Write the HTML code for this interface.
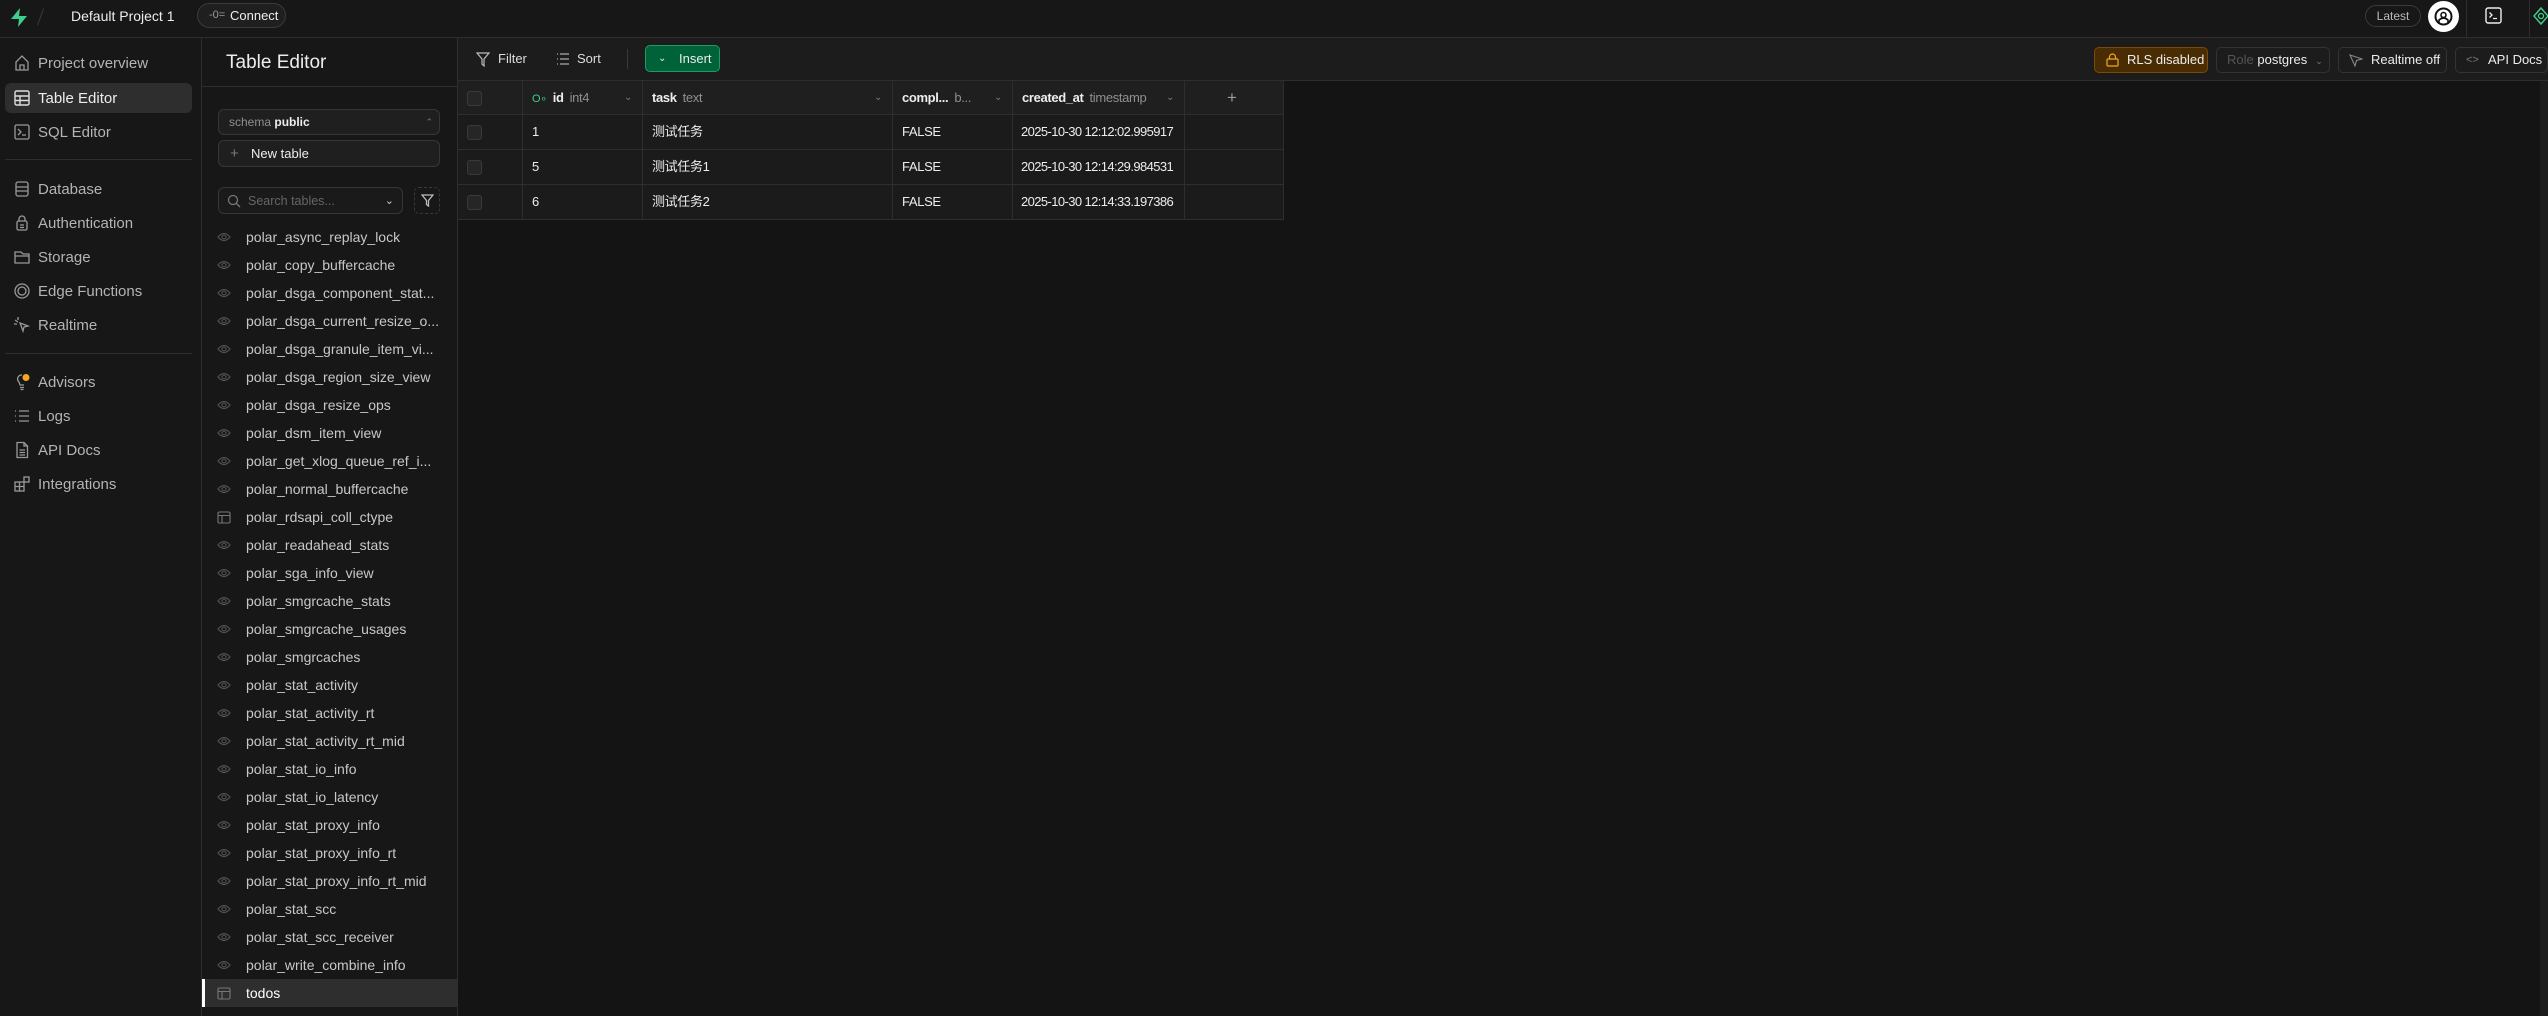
<!DOCTYPE html>
<html><head><meta charset="utf-8"><style>
*{box-sizing:border-box;margin:0;padding:0}
body{width:2548px;height:1016px;background:#141414;font-family:"Liberation Sans","Noto Sans CJK SC",sans-serif;color:#ededed;position:relative;overflow:hidden}
.abs{position:absolute}
#top{left:0;top:0;width:2548px;height:38px;background:#171717;border-bottom:1px solid #2e2e2e}
#side{left:0;top:38px;width:202px;height:978px;background:#171717;border-right:1px solid #2e2e2e}
#panel{left:202px;top:38px;width:256px;height:978px;background:#171717;border-right:1px solid #2e2e2e}
#tool{left:458px;top:38px;width:2090px;height:43px;background:#1c1c1c;border-bottom:1px solid #2e2e2e}
.nav{position:absolute;left:5px;width:187px;height:30px;font-size:15px;color:#b4b4b4;display:flex;align-items:center;padding-left:33px}
.nav svg{position:absolute;left:8px;top:6px}
.nav.act{background:#2e2e2e;color:#ededed;border-radius:6px}
.hr{position:absolute;left:5px;width:187px;height:1px;background:#2e2e2e}
.it{position:absolute;left:0;width:256px;height:28px;font-size:14px;color:#c8c8c8;padding-left:44px;line-height:28px;white-space:nowrap}
.it svg{position:absolute;left:15px;top:9px}
.btn{position:absolute;border:1px solid #363636;border-radius:6px;font-size:13px;display:flex;align-items:center;background:#1f1f1f}
.cell{position:absolute;height:35px;border-right:1px solid #2e2e2e;border-bottom:1px solid #2e2e2e;font-size:13px;letter-spacing:-0.35px;line-height:34px;padding-left:9px;white-space:nowrap;overflow:hidden}
.hd{background:#1f1f1f;height:34px;font-weight:bold}
.hd span{font-weight:normal;color:#8f8f8f;margin-left:6px}
.row{background:#1b1b1b}
.cb{position:absolute;left:9px;top:10px;width:15px;height:15px;border:1px solid #3a3a3a;border-radius:3px;background:#262626}
.chev{position:absolute;right:10px;top:0;color:#7a7a7a;font-size:10px;font-weight:normal}
</style></head><body>
<div id="top" class="abs">
 <svg class="abs" style="left:10px;top:8px" width="18" height="19" viewBox="0 0 18 19"><path d="M10 0 L1 11 H9 L8 19 L17 8 H9 Z" fill="#3ecf8e"/></svg>
 <div class="abs" style="left:40px;top:8px;width:1px;height:18px;background:#3a3a3a;transform:rotate(20deg)"></div>
 <div class="abs" style="left:71px;top:8px;font-size:14px">Default Project 1</div>
 <div class="abs" style="left:197px;top:3px;width:89px;height:25px;border:1px solid #3a3a3a;border-radius:13px;background:#1f1f1f;font-size:13px;padding-left:32px;line-height:23px">Connect<span class="abs" style="left:11px;top:0;color:#999;font-size:11px">-0=</span></div>
 <div class="abs" style="left:2365px;top:5px;width:56px;height:22px;border:1px solid #3a3a3a;border-radius:11px;font-size:12px;color:#bbb;text-align:center;line-height:20px">Latest</div>
 <div class="abs" style="left:2428px;top:1px;width:31px;height:31px;border-radius:50%;background:#fff"><svg width="31" height="31" viewBox="0 0 31 31"><circle cx="15.5" cy="15.5" r="8" fill="none" stroke="#111" stroke-width="2"/><circle cx="15.5" cy="14" r="2.5" fill="none" stroke="#111" stroke-width="1.6"/><path d="M11 23 V19 Q15.5 15 20 19 V23" fill="none" stroke="#111" stroke-width="1.6"/></svg></div>
 <div class="abs" style="left:2466px;top:0;width:1px;height:38px;background:#2e2e2e"></div>
 <svg class="abs" style="left:2485px;top:7px" width="17" height="17" viewBox="0 0 17 17"><rect x="1" y="1" width="15" height="15" rx="2" fill="none" stroke="#eee" stroke-width="1.4"/><path d="M4.5 5.5 L7 8 L4.5 10.5 M8 11.5 H12" stroke="#eee" stroke-width="1.3" fill="none"/></svg>
 <div class="abs" style="left:2529px;top:0;width:1px;height:38px;background:#2e2e2e"></div>
 <svg class="abs" style="left:2533px;top:6px" width="16" height="20" viewBox="0 0 16 20"><path d="M8 2 L15 10 L8 18 L1 10 Z" fill="none" stroke="#3ecf8e" stroke-width="1.4"/><circle cx="8" cy="10" r="2.5" fill="none" stroke="#3ecf8e" stroke-width="1.3"/></svg>
</div>
<div id="side" class="abs">
 <div class="nav" style="top:10px"><svg width="18" height="18" viewBox="0 0 18 18" fill="none" stroke="#999" stroke-width="1.3"><path d="M3 8 L9 2 L15 8 V16 H3 Z M7 16 V11 H11 V16"/></svg>Project overview</div>
 <div class="nav act" style="top:45px"><svg width="18" height="18" viewBox="0 0 18 18" fill="none" stroke="#ddd" stroke-width="1.4"><rect x="2" y="2" width="14" height="14" rx="1.5"/><path d="M2 7 H16 M2 11.5 H16 M7 7 V16"/></svg>Table Editor</div>
 <div class="nav" style="top:79px"><svg width="18" height="18" viewBox="0 0 18 18" fill="none" stroke="#999" stroke-width="1.3"><rect x="2" y="2" width="14" height="14" rx="1.5"/><path d="M5 6 L8 9 L5 12 M9 12 H13"/></svg>SQL Editor</div>
 <div class="hr" style="top:121px"></div>
 <div class="nav" style="top:136px"><svg width="18" height="18" viewBox="0 0 18 18" fill="none" stroke="#999" stroke-width="1.3"><rect x="3" y="2" width="12" height="14" rx="2"/><path d="M3 7 H15 M3 11 H15"/></svg>Database</div>
 <div class="nav" style="top:170px"><svg width="18" height="18" viewBox="0 0 18 18" fill="none" stroke="#999" stroke-width="1.3"><rect x="4" y="7" width="10" height="9" rx="1.5"/><path d="M6 7 V5 A3 3 0 0 1 12 5 V7 M7 11 H11 M7 13.5 H11"/></svg>Authentication</div>
 <div class="nav" style="top:204px"><svg width="18" height="18" viewBox="0 0 18 18" fill="none" stroke="#999" stroke-width="1.3"><path d="M2 4 H8 L10 6 H16 V15 H2 Z M2 8 H16"/></svg>Storage</div>
 <div class="nav" style="top:238px"><svg width="18" height="18" viewBox="0 0 18 18" fill="none" stroke="#999" stroke-width="1.3"><circle cx="9" cy="9" r="7"/><circle cx="9" cy="9" r="4"/></svg>Edge Functions</div>
 <div class="nav" style="top:272px"><svg width="18" height="18" viewBox="0 0 18 18" fill="none" stroke="#999" stroke-width="1.3"><path d="M7 7 L15 10 L11 11 L10 15 Z M2 4 L5 6 M5 1 V4 M1 8 H4"/></svg>Realtime</div>
 <div class="hr" style="top:315px"></div>
 <div class="nav" style="top:329px"><svg width="20" height="18" viewBox="0 0 20 18" fill="none" stroke="#999" stroke-width="1.3"><path d="M9 2 A4 4 0 0 0 6 9 L7 12 H11 M7 14.5 H11 M7.5 16.5 H10.5"/><circle cx="13" cy="4.5" r="3.5" fill="#f5a623" stroke="none"/></svg>Advisors</div>
 <div class="nav" style="top:363px"><svg width="18" height="18" viewBox="0 0 18 18" fill="none" stroke="#999" stroke-width="1.3"><path d="M2 4 H3 M2 9 H3 M2 14 H3 M6 4 H16 M6 9 H16 M6 14 H16"/></svg>Logs</div>
 <div class="nav" style="top:397px"><svg width="18" height="18" viewBox="0 0 18 18" fill="none" stroke="#999" stroke-width="1.3"><path d="M4 1.5 H11 L14.5 5 V16.5 H4 Z M11 1.5 V5 H14.5 M6.5 9 H12 M6.5 11.5 H12 M6.5 14 H12"/></svg>API Docs</div>
 <div class="nav" style="top:431px"><svg width="18" height="18" viewBox="0 0 18 18" fill="none" stroke="#999" stroke-width="1.3"><rect x="2" y="7" width="9" height="9"/><path d="M2 11.5 H11 M6.5 7 V16"/><rect x="11" y="2" width="5" height="5"/></svg>Integrations</div>
</div>
<div id="panel" class="abs">
 <div class="abs" style="left:24px;top:14px;font-size:19px">Table Editor</div>
 <div class="abs" style="left:0;top:48px;width:256px;height:1px;background:#2e2e2e"></div>
 <div class="btn" style="left:16px;top:71px;width:222px;height:26px;font-size:12px;padding-left:10px"><span style="color:#8f8f8f">schema&nbsp;</span><b>public</b><span class="abs" style="right:6px;color:#777;font-size:9px">⌃</span></div>
 <div class="btn" style="left:16px;top:102px;width:222px;height:27px;padding-left:32px">New table<span class="abs" style="left:11px;color:#777;font-size:15px">+</span></div>
 <div class="btn" style="left:16px;top:149px;width:185px;height:27px;padding-left:29px;color:#666;font-size:12.5px;background:#1a1a1a">Search tables...<svg class="abs" style="left:8px;top:6px" width="14" height="14" viewBox="0 0 14 14" fill="none" stroke="#777" stroke-width="1.3"><circle cx="6" cy="6" r="4.5"/><path d="M9.5 9.5 L13 13"/></svg><span class="abs" style="right:8px;color:#ccc;font-size:11px">⌄</span></div>
 <div class="abs" style="left:212px;top:149px;width:26px;height:27px;border:1px dashed #3a3a3a;border-radius:5px"><svg style="margin:6px 6px" width="13" height="13" viewBox="0 0 13 13" fill="none" stroke="#bbb" stroke-width="1.3"><path d="M1 1 H12 L7.5 6.5 V12 L5.5 10.5 V6.5 Z"/></svg></div>
 <div id="list"></div>
</div>
<div id="tool" class="abs">
 <svg class="abs" style="left:18px;top:14px" width="14" height="15" viewBox="0 0 14 15" fill="none" stroke="#bbb" stroke-width="1.2"><path d="M1 1 H13 L8 7 V14 L6 12 V7 Z"/></svg>
 <div class="abs" style="left:40px;top:13px;font-size:13px;color:#ddd">Filter</div>
 <svg class="abs" style="left:98px;top:15px" width="14" height="12" viewBox="0 0 14 12" fill="none" stroke="#aaa" stroke-width="1.2"><path d="M1 1 H2 M1 6 H2 M1 11 H2 M4 1 H13 M4 6 H13 M4 11 H13"/></svg>
 <div class="abs" style="left:119px;top:13px;font-size:13px;color:#ddd">Sort</div>
 <div class="abs" style="left:169px;top:11px;width:1px;height:20px;background:#3a3a3a"></div>
 <div class="abs" style="left:187px;top:7px;width:75px;height:27px;background:#006239;border:1px solid #1f9c63;border-radius:5px;font-size:13px;line-height:25px;padding-left:33px">Insert<span class="abs" style="left:12px;top:0;font-size:10px">⌄</span></div>
 <div class="abs" style="left:1636px;top:9px;width:114px;height:26px;background:#4a2c02;border:1px solid #7a4a06;border-radius:5px;font-size:13px;line-height:24px;padding-left:32px">RLS disabled<svg class="abs" style="left:11px;top:5px" width="13" height="14" viewBox="0 0 13 14" fill="none" stroke="#f5a623" stroke-width="1.2"><rect x="1" y="6" width="11" height="7" rx="1"/><path d="M3.5 6 V4 A3 3 0 0 1 9.5 4 V6"/></svg></div>
 <div class="abs" style="left:1758px;top:9px;width:114px;height:26px;border:1px solid #333;border-radius:5px;font-size:13px;line-height:24px;padding-left:10px"><span style="color:#555">Role </span>postgres<span style="color:#777;font-size:9px;margin-left:8px">⌄</span></div>
 <div class="abs" style="left:1880px;top:9px;width:109px;height:26px;border:1px solid #333;border-radius:5px;font-size:13px;line-height:24px;padding-left:32px">Realtime off<svg class="abs" style="left:10px;top:6px" width="14" height="13" viewBox="0 0 14 13" fill="none" stroke="#888" stroke-width="1.1"><path d="M1 1 L13 5 L7.5 6.5 L6 12 Z"/></svg></div>
 <div class="abs" style="left:1997px;top:9px;width:93px;height:26px;border:1px solid #333;border-radius:5px;font-size:13px;line-height:24px;padding-left:32px">API Docs<span class="abs" style="left:10px;color:#777;font-size:11px">&lt;&gt;</span></div>
</div>
<div class="abs" style="left:2540px;top:81px;width:8px;height:935px;background:#1c1c1c"></div>
<div id="grid" class="abs" style="left:458px;top:81px"></div>
<script>
var names=["polar_async_replay_lock","polar_copy_buffercache","polar_dsga_component_stat...","polar_dsga_current_resize_o...","polar_dsga_granule_item_vi...","polar_dsga_region_size_view","polar_dsga_resize_ops","polar_dsm_item_view","polar_get_xlog_queue_ref_i...","polar_normal_buffercache","polar_rdsapi_coll_ctype","polar_readahead_stats","polar_sga_info_view","polar_smgrcache_stats","polar_smgrcache_usages","polar_smgrcaches","polar_stat_activity","polar_stat_activity_rt","polar_stat_activity_rt_mid","polar_stat_io_info","polar_stat_io_latency","polar_stat_proxy_info","polar_stat_proxy_info_rt","polar_stat_proxy_info_rt_mid","polar_stat_scc","polar_stat_scc_receiver","polar_write_combine_info","todos"];
var eye='<svg width="14" height="10" viewBox="0 0 14 10" fill="none" stroke="#555" stroke-width="1.1"><path d="M1 5 Q7 -2 13 5 Q7 12 1 5 Z"/><circle cx="7" cy="5" r="2"/></svg>';
var h='';names.forEach(function(n,i){var top=185+i*28;var t=(n=="todos"),tb=(n=="polar_rdsapi_coll_ctype");
var icon=(t||tb)?'<svg style="position:absolute;left:'+(t?12:15)+'px;top:8px" width="14" height="13" viewBox="0 0 14 13" fill="none" stroke="#777" stroke-width="1.1"><rect x="1" y="1" width="12" height="11" rx="1.5"/><path d="M1 4.5 H13 M5 4.5 V12"/></svg>':eye.replace('<svg','<svg style="position:absolute;left:15px;top:9px"');
h+='<div class="it" style="top:'+top+'px;'+(t?'background:#2e2e2e;color:#fff;border-left:3px solid #fff;padding-left:41px':'')+'">'+icon+n+'</div>';});
document.getElementById('list').innerHTML=h;
var cols=[[0,65],[65,120],[185,250],[435,120],[555,172],[727,99]];
var g='';
var hd=['','<span style="color:#3ecf8e;font-weight:normal;font-size:11px;margin:0 6px 0 0">O&#8728;</span>id<span>int4</span>','task<span>text</span>','compl...<span>b...</span>','created_at<span>timestamp</span>',''];
cols.forEach(function(c,j){g+='<div class="cell hd" style="left:'+c[0]+'px;top:0;width:'+c[1]+'px">'+(j==0?'<div class="cb"></div>':'')+hd[j]+(j>0&&j<5?'<b class="chev">⌄</b>':'')+(j==5?'<span style="position:absolute;left:42px;color:#999;font-size:17px;margin:0">+</span>':'')+'</div>';});
var rows=[["1","测试任务","FALSE","2025-10-30 12:12:02.995917"],["5","测试任务1","FALSE","2025-10-30 12:14:29.984531"],["6","测试任务2","FALSE","2025-10-30 12:14:33.197386"]];
rows.forEach(function(r,i){var top=34+i*35;cols.forEach(function(c,j){g+='<div class="cell row" style="left:'+c[0]+'px;top:'+top+'px;width:'+c[1]+'px;'+(j==4?'letter-spacing:-0.6px;padding-left:8px':'')+'">'+(j==0?'<div class="cb"></div>':(j<5?r[j-1]:''))+'</div>';});});
document.getElementById('grid').innerHTML=g;
</script>
</body></html>
